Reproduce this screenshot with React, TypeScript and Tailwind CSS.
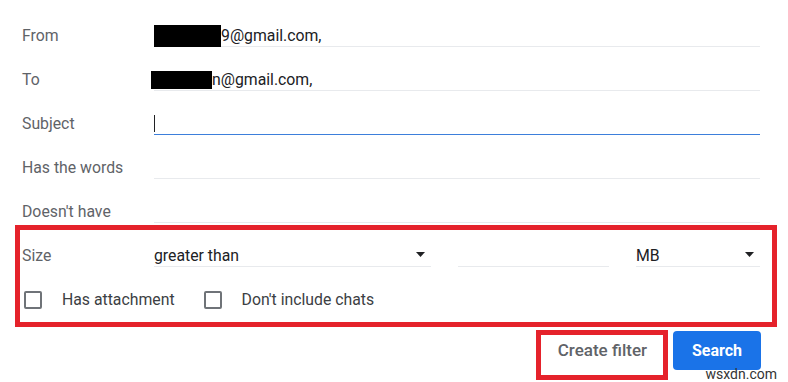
import React from "react";

const Caret = () => (
  <svg width="9" height="5" viewBox="0 0 9 5" className="shrink-0">
    <path d="M0 0h9L4.5 5z" fill="#202124" />
  </svg>
);

const Row = ({
  label,
  children,
  line = "border-[#e8eaed]",
}: {
  label: string;
  children?: React.ReactNode;
  line?: string;
}) => (
  <div className="flex items-end h-[44px]">
    <div className="w-[132px] shrink-0 pb-[1px] leading-[20px] text-[#5f6368]">{label}</div>
    <div className={`flex-1 h-[24px] flex items-center border-b ${line} text-[#202124]`}>
      {children}
    </div>
  </div>
);

const Checkbox = ({ label }: { label: string }) => (
  <label className="flex items-center gap-[20px]">
    <span className="w-[18px] h-[18px] rounded-[2px] border-2 border-[#6f7378]" />
    <span className="text-[#3c4043]">{label}</span>
  </label>
);

export default function App() {
  return (
    <div
      className="relative w-[788px] h-[382px] overflow-hidden bg-white text-[15.8px]"
      style={{ fontFamily: "Roboto, 'Noto Sans', Arial, sans-serif" }}
    >
      <div className="pt-[3px] pl-[22px] pr-[28px]">
        <Row label="From">
          <span className="inline-block w-[67px] h-[22px] bg-black -mb-[2px]" />
          <span className="mt-[2px]">9@gmail.com,</span>
        </Row>
        <Row label="To">
          <span className="inline-block w-[61px] h-[18px] bg-black -ml-[3px] -mb-[2px]" />
          <span className="mt-[2px]">n@gmail.com,</span>
        </Row>
        <Row label="Subject" line="border-[#3d7fdb]">
          <span className="w-[1px] h-[17px] bg-[#202124] -mb-[1px]" />
        </Row>
        <Row label="Has the words" />
        <Row label="Doesn't have" />

        {/* size + checkboxes, highlighted */}
        <div className="relative">
          <div className="absolute top-[2px] -left-[7px] -right-[17px] -bottom-[18px] border-[5px] border-[#e5222b] pointer-events-none" />
          <div className="flex items-end h-[44px]">
            <div className="w-[132px] shrink-0 pb-[1px] leading-[20px] text-[#5f6368]">Size</div>
            <div className="w-[277px] h-[24px] flex items-center justify-between pr-[6px] border-b border-[#e8eaed] text-[#202124]">
              <span className="mt-[2px]">greater than</span>
              <Caret />
            </div>
            <div className="ml-[27px] w-[151px] h-[24px] border-b border-[#e8eaed]" />
            <div className="ml-[27px] flex-1 h-[24px] flex items-center justify-between pr-[6px] border-b border-[#e8eaed] text-[#202124]">
              <span className="mt-[2px]">MB</span>
              <Caret />
            </div>
          </div>
          <div className="flex items-center h-[18px] mt-[24px] pl-[2px] gap-[29px]">
            <Checkbox label="Has attachment" />
            <Checkbox label="Don't include chats" />
          </div>
        </div>

        <div className="flex justify-end items-start gap-[10px] mt-[22px] -mr-[1px]">
          <div className="relative">
            <div className="absolute -top-[1px] -left-[6px] -right-[5px] -bottom-[10px] border-[5px] border-[#e5222b] pointer-events-none" />
            <button className="h-[39px] px-[16px] rounded-[4px] text-[17px] font-medium text-[#5f6368]">
              Create filter
            </button>
          </div>
          <button className="h-[39px] w-[88px] rounded-[4px] bg-[#1a73e8] text-[16px] font-bold text-white">
            Search
          </button>
        </div>
      </div>

      <div className="absolute right-[11px] bottom-0 leading-[16px] text-[14px] text-[#333]">wsxdn.com</div>
    </div>
  );
}
